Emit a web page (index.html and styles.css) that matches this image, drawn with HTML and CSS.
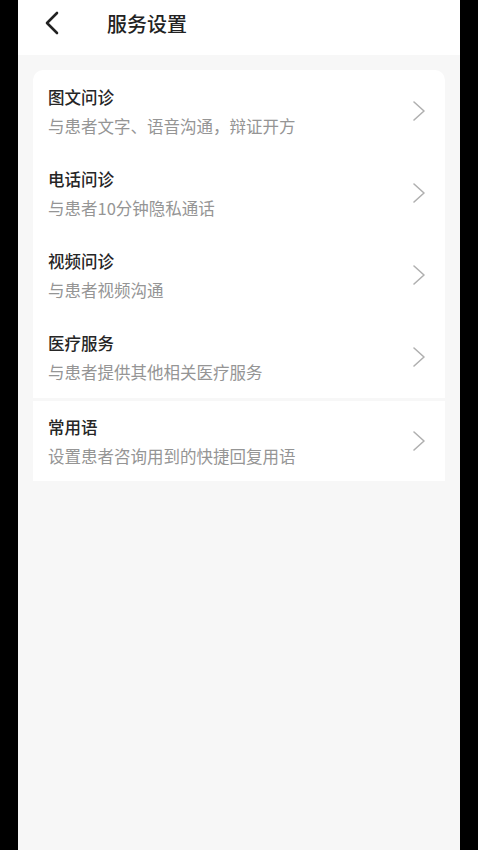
FILE: index.html
```html
<!DOCTYPE html>
<html lang="zh">
<head>
<meta charset="utf-8">
<title>服务设置</title>
<link rel="stylesheet" href="styles.css">
</head>
<body>
<div class="app">
  <header class="topbar">
    <span class="back">
      <svg width="16" height="24" viewBox="0 0 16 24"><path d="M13 2 L3 12 L13 22" fill="none" stroke="#222" stroke-width="2.6" stroke-linecap="round" stroke-linejoin="round"/></svg>
    </span>
    <h1 class="title">服务设置</h1>
  </header>
  <main class="content">
    <section class="card card-main">
      <div class="row">
        <div class="texts"><div class="name">图文问诊</div><div class="desc">与患者文字、语音沟通，辩证开方</div></div>
        <svg class="chev" width="14" height="22" viewBox="0 0 14 22"><path d="M2 2 L12 11 L2 20" fill="none" stroke="#b0b0b0" stroke-width="1.6" stroke-linecap="round" stroke-linejoin="round"/></svg>
      </div>
      <div class="row">
        <div class="texts"><div class="name">电话问诊</div><div class="desc">与患者10分钟隐私通话</div></div>
        <svg class="chev" width="14" height="22" viewBox="0 0 14 22"><path d="M2 2 L12 11 L2 20" fill="none" stroke="#b0b0b0" stroke-width="1.6" stroke-linecap="round" stroke-linejoin="round"/></svg>
      </div>
      <div class="row">
        <div class="texts"><div class="name">视频问诊</div><div class="desc">与患者视频沟通</div></div>
        <svg class="chev" width="14" height="22" viewBox="0 0 14 22"><path d="M2 2 L12 11 L2 20" fill="none" stroke="#b0b0b0" stroke-width="1.6" stroke-linecap="round" stroke-linejoin="round"/></svg>
      </div>
      <div class="row">
        <div class="texts"><div class="name">医疗服务</div><div class="desc">与患者提供其他相关医疗服务</div></div>
        <svg class="chev" width="14" height="22" viewBox="0 0 14 22"><path d="M2 2 L12 11 L2 20" fill="none" stroke="#b0b0b0" stroke-width="1.6" stroke-linecap="round" stroke-linejoin="round"/></svg>
      </div>
    </section>
    <section class="card card-sub">
      <div class="row">
        <div class="texts"><div class="name">常用语</div><div class="desc">设置患者咨询用到的快捷回复用语</div></div>
        <svg class="chev" width="14" height="22" viewBox="0 0 14 22"><path d="M2 2 L12 11 L2 20" fill="none" stroke="#b0b0b0" stroke-width="1.6" stroke-linecap="round" stroke-linejoin="round"/></svg>
      </div>
    </section>
  </main>
</div>
</body>
</html>
```
FILE: styles.css
```css
html, body {
  margin: 0;
  padding: 0;
  background: #000;
}
body {
  font-family: "Noto Sans CJK SC", "Noto Sans", sans-serif;
}
.app {
  width: 442px;
  height: 850px;
  margin-left: 18px;
  background: #f7f7f7;
  overflow: hidden;
}
.topbar {
  height: 55px;
  background: #fff;
  display: flex;
  align-items: center;
}
.back {
  display: flex;
  margin-left: 26px;
  margin-top: -9px;
}
.title {
  margin: 0 0 0 47px;
  font-size: 20px;
  font-weight: 500;
  color: #222;
  margin-top: -9px;
}
.content {
  padding: 15px 15px 0 15px;
  display: flex;
  flex-direction: column;
  gap: 3px;
}
.card {
  background: #fff;
}
.card-main {
  border-radius: 10px 10px 0 0;
}
.row {
  height: 82px;
  display: flex;
  align-items: center;
  padding: 0 19px 0 15px;
}
.card-sub .row {
  height: 80px;
}
.texts {
  flex: 1;
  display: flex;
  flex-direction: column;
  margin-top: 1px;
}
.name {
  font-size: 16.5px;
  font-weight: 500;
  color: #262626;
  line-height: 24px;
}
.desc {
  font-size: 16.5px;
  color: #959595;
  line-height: 24px;
  margin-top: 5px;
}
.chev {
  display: block;
}
```
